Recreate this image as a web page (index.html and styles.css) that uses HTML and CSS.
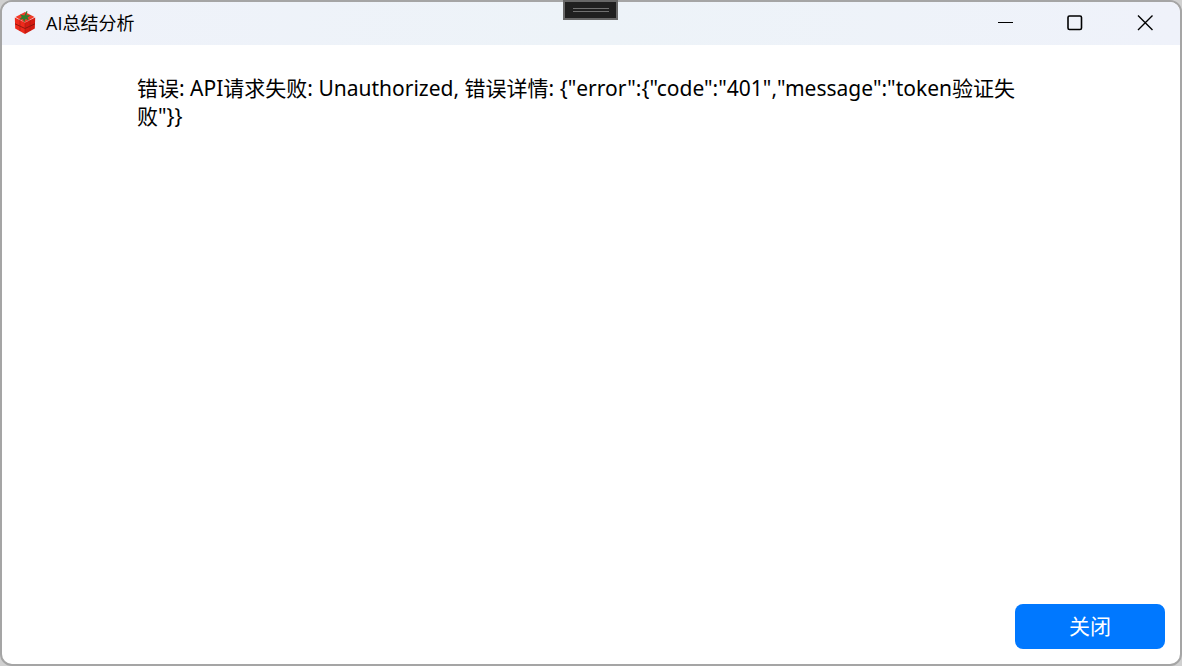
FILE: index.html
```html
<!DOCTYPE html>
<html lang="zh-CN">
<head>
<meta charset="utf-8">
<title>AI总结分析</title>
<link rel="stylesheet" href="styles.css">
</head>
<body>
<div class="window">
  <header class="titlebar">
    <svg class="logo" viewBox="0 0 22 24" aria-hidden="true">
      <path fill="#f23a28" d="M11 1 20.500 6 11 11.500 1.500 6Z"/>
      <path fill="#ee2a1c" d="M.8 6.500 11 11.500V23L1.200 17.500Z"/>
      <path fill="#d41c12" d="M21.200 6.500 11 11.500V23L20.800 17.500Z"/>
      <path fill="none" stroke="#7a140c" stroke-width=".8" d="M1 12.800 11 17.500 21 12.800"/>
      <path fill="none" stroke="#a81c12" stroke-width=".6" d="M6 9V20M16 9V20M11 12V22"/>
      <path fill="#2f7d2c" d="M10.400 4.500 12.500 0 13.500 .6 12.300 4.300 17 4.300 13.500 6.500 15 9.800 11.600 7.800 10 11.500 9 8 5 8.800 7.800 6 6 3.500Z"/>
    </svg>
    <h1 class="title">AI总结分析</h1>
    <div class="controls">
      <button class="control" aria-label="最小化"><svg viewBox="0 0 16 16"><path d="M1 7.500H16"/></svg></button>
      <button class="control" aria-label="最大化"><svg viewBox="0 0 16 16"><rect class="heavy" x="1" y="1" width="13.500" height="13.500" rx="1.500"/></svg></button>
      <button class="control" aria-label="关闭窗口"><svg viewBox="0 0 16 16"><path class="cross" d="M1 .5 15.500 15M15.500 .5 1 15"/></svg></button>
    </div>
  </header>
  <main class="content">
    <p class="message">错误: API请求失败: Unauthorized, 错误详情: {"error":{"code":"401","message":"token验证失败"}}</p>
  </main>
  <footer class="footer"><button class="close">关闭</button></footer>
</div>
<div class="handle"><span class="grip"></span></div>
</body>
</html>
```
FILE: styles.css
```css
* { box-sizing: border-box; }
body {
  margin: 0;
  background: #d0d0d0;
  color: #000;
  font-family: "Noto Sans", "Noto Sans CJK SC", sans-serif;
}
button { border: 0; padding: 0; font: inherit; }
.window {
  display: flex;
  flex-direction: column;
  min-height: 100vh;
  border: 2px solid #a5a5a5;
  border-radius: 12px;
  background: #fff;
  overflow: hidden;
}
.titlebar {
  display: flex;
  align-items: center;
  height: 43px;
  padding: 0 0 2px 12px;
  background: linear-gradient(90deg, #eff2fa, #edf3f8 50%, #eff2fa);
}
.logo { width: 22px; height: 24px; margin-right: 10px; }
.title {
  margin: 0;
  font-family: "Open Sans", "Noto Sans CJK SC", sans-serif;
  font-size: 18px;
  line-height: 24px;
  font-weight: 400;
}
.controls { display: flex; height: 100%; margin-left: auto; }
.control {
  display: grid;
  place-items: center;
  width: 70px;
  background: transparent;
}
.control svg { width: 16px; height: 16px; fill: none; stroke: #000; }
.control .heavy { stroke-width: 1.6; }
.control .cross { stroke-width: 1.4; }
.content { flex: 1; padding: 29px 135px; }
.message {
  margin: 0;
  font-size: 21px;
  line-height: 28px;
}
.footer { display: flex; justify-content: flex-end; padding: 15px; }
.close {
  width: 150px;
  height: 45px;
  padding-bottom: 2px;
  border-radius: 8px;
  background: #0078ff;
  color: #fff;
  font-size: 21px;
  line-height: 28px;
}
.handle {
  position: absolute;
  top: 0;
  left: 50%;
  display: grid;
  place-items: center;
  width: 55px;
  height: 20px;
  margin-left: -28px;
  border: 2px solid #686868;
  background: #202020;
}
.grip {
  width: 36px;
  height: 4px;
  border: solid #707070;
  border-width: 1px 0;
}
```
